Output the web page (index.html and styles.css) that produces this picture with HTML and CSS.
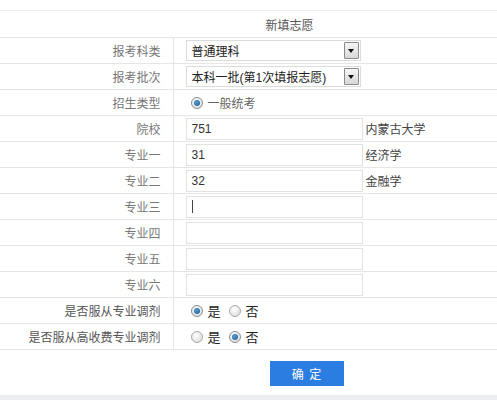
FILE: index.html
```html
<!DOCTYPE html>
<html lang="zh">
<head>
<meta charset="utf-8">
<title>新填志愿</title>
<link rel="stylesheet" href="styles.css">
</head>
<body>
<div class="page">
  <div class="top-gap"></div>
  <table class="form">
    <colgroup><col class="c1"><col class="c2"></colgroup>
    <tr class="head"><td colspan="2">新填志愿</td></tr>
    <tr>
      <td class="lbl">报考科类</td>
      <td class="val"><div class="sel w1"><span class="sel-text">普通理科</span><span class="sel-btn"><span class="tri"></span></span></div></td>
    </tr>
    <tr>
      <td class="lbl">报考批次</td>
      <td class="val"><div class="sel w1"><span class="sel-text">本科一批(第1次填报志愿)</span><span class="sel-btn"><span class="tri"></span></span></div></td>
    </tr>
    <tr>
      <td class="lbl">招生类型</td>
      <td class="val"><span class="radio on"></span><span class="rtext light">一般统考</span></td>
    </tr>
    <tr>
      <td class="lbl">院校</td>
      <td class="val"><div class="inp">751</div><span class="note">内蒙古大学</span></td>
    </tr>
    <tr>
      <td class="lbl">专业一</td>
      <td class="val"><div class="inp">31</div><span class="note">经济学</span></td>
    </tr>
    <tr>
      <td class="lbl">专业二</td>
      <td class="val"><div class="inp">32</div><span class="note">金融学</span></td>
    </tr>
    <tr>
      <td class="lbl">专业三</td>
      <td class="val"><div class="inp"><span class="caret"></span></div></td>
    </tr>
    <tr>
      <td class="lbl">专业四</td>
      <td class="val"><div class="inp"></div></td>
    </tr>
    <tr>
      <td class="lbl">专业五</td>
      <td class="val"><div class="inp"></div></td>
    </tr>
    <tr>
      <td class="lbl">专业六</td>
      <td class="val"><div class="inp"></div></td>
    </tr>
    <tr>
      <td class="lbl dark">是否服从专业调剂</td>
      <td class="val"><span class="radio on"></span><span class="rtext">是</span><span class="radio"></span><span class="rtext">否</span></td>
    </tr>
    <tr>
      <td class="lbl dark">是否服从高收费专业调剂</td>
      <td class="val"><span class="radio"></span><span class="rtext">是</span><span class="radio on"></span><span class="rtext">否</span></td>
    </tr>
  </table>
  <div class="actions"><span class="btn">确&nbsp;定</span></div>
  <div class="band"></div>
</div>
</body>
</html>
```

FILE: styles.css
```css
html, body {
  margin: 0;
  padding: 0;
  background: #fff;
}
body {
  font-family: "Liberation Sans", Arial, "Noto Sans CJK SC", sans-serif;
  font-size: 12px;
  color: #333;
}
.page {
  width: 497px;
  height: 400px;
  overflow: hidden;
  background: #fff;
}
.top-gap {
  height: 10px;
}
.form {
  border-collapse: collapse;
  width: 579px;
  table-layout: fixed;
}
.c1 {
  width: 173px;
}
.form td {
  border-top: 1px solid #e6e6e6;
  border-bottom: 1px solid #e6e6e6;
  padding: 0;
  height: 25px;
  vertical-align: middle;
}
.form tr.head td {
  height: 26px;
  text-align: center;
  color: #555;
  border-top: 1px solid #ebebeb;
}
.form td.lbl {
  padding-right: 12px;
  text-align: right;
  color: #777;
  border-right: 1px solid #e6e6e6;
  white-space: nowrap;
}
.form td.lbl.dark {
  color: #555;
}
.form td.val {
  padding-left: 12px;
  white-space: nowrap;
}
.sel {
  display: inline-flex;
  align-items: center;
  justify-content: space-between;
  box-sizing: border-box;
  height: 21px;
  border: 1px solid #dcdcdc;
  background: #fff;
  padding: 0 1px 0 5px;
  vertical-align: middle;
}
.sel.w1 {
  width: 175px;
}
.sel-text {
  color: #222;
}
.sel-btn {
  box-sizing: border-box;
  width: 15px;
  height: 17px;
  border: 1px solid #8a8a8a;
  border-radius: 1px;
  background: linear-gradient(#f6f6f6, #d8d8d8);
  display: flex;
  align-items: center;
  justify-content: center;
}
.tri {
  width: 0;
  height: 0;
  border-left: 3px solid transparent;
  border-right: 3px solid transparent;
  border-top: 4px solid #111;
}
.inp {
  display: inline-flex;
  align-items: center;
  box-sizing: border-box;
  width: 177px;
  height: 22px;
  border: 1px solid #e2e2e2;
  padding-left: 5px;
  color: #333;
  font-size: 12px;
  vertical-align: middle;
}
.caret {
  display: inline-block;
  width: 1px;
  height: 13px;
  background: #444;
}
.note {
  display: inline-block;
  margin-left: 3px;
  color: #444;
  vertical-align: middle;
}
.radio {
  display: inline-block;
  box-sizing: border-box;
  width: 12px;
  height: 12px;
  border-radius: 50%;
  border: 1px solid #a9a9a9;
  background: radial-gradient(circle at 40% 35%, #ffffff, #d6d6d6);
  vertical-align: middle;
  margin-left: 5px;
  position: relative;
}
.radio.on {
  border-color: #8c8c8c;
}
.radio.on::after {
  content: "";
  position: absolute;
  left: 2px;
  top: 2px;
  width: 6px;
  height: 6px;
  border-radius: 50%;
  background: radial-gradient(circle at 40% 35%, #4f9fd6, #1d5a8e);
}
.rtext {
  display: inline-block;
  vertical-align: middle;
  margin-left: 5px;
  margin-right: 3px;
  color: #222;
  font-size: 13px;
}
.rtext.light {
  color: #666;
  font-size: 12px;
}
.actions {
  height: 45px;
  padding-left: 270px;
  display: flex;
  align-items: center;
}
.btn {
  display: inline-flex;
  align-items: center;
  justify-content: center;
  width: 74px;
  height: 25px;
  background: #2b7de1;
  color: #fff;
  font-size: 12px;
  letter-spacing: 1px;
  margin-top: 1px;
}
.band {
  height: 10px;
  background: #eceef2;
}
```
